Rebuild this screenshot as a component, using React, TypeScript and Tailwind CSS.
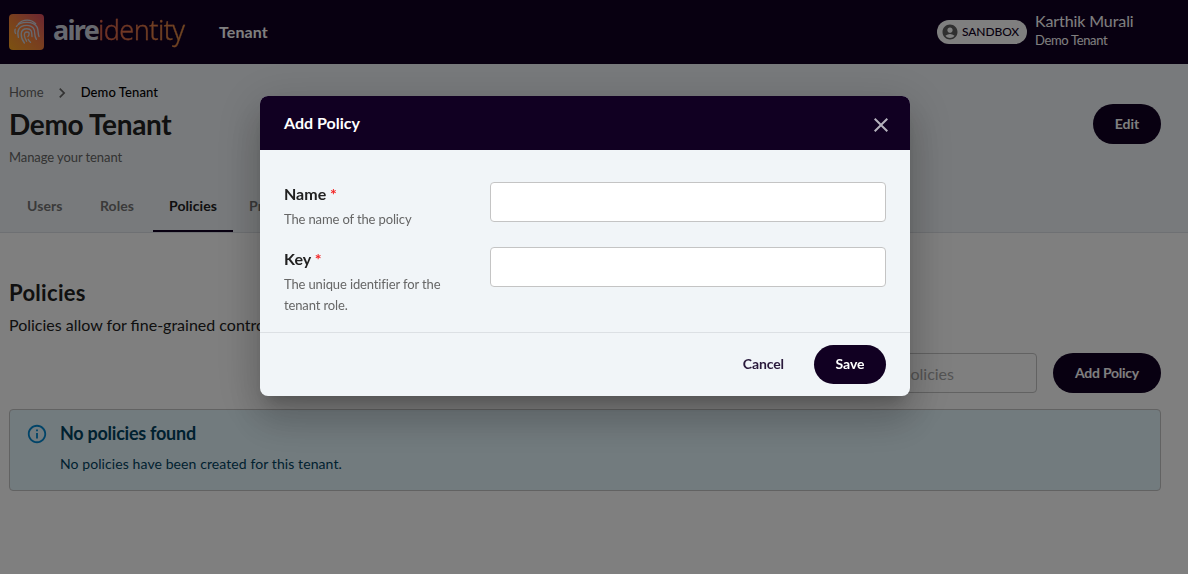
import { MdAccountCircle, MdChevronRight, MdClose, MdInfoOutline } from "react-icons/md";

const tabs = ["Users", "Roles", "Policies", "Pr"];

function FingerprintMark() {
  return (
    <svg viewBox="0 0 26 26" className="size-[26px]" fill="none" stroke="#cfd3df" strokeWidth="1.35" strokeLinecap="round">
      <path d="M4.400 4.800C9 -.1 17.200 -.1 21.600 4.800" />
      <path d="M1.200 10.200C.6 11.800 .8 13 1.600 14.500" />
      <path d="M2.400 7.400C6 2.200 20 1.500 23.200 8.400C24.600 11.500 23.800 15 25 17.500" />
      <path d="M4.400 18.300C3 13 3.800 6.400 12.800 6.400C19.600 6.400 20.900 11 20.800 15C20.800 17.500 21.800 19.300 22.400 20.300" />
      <path d="M10.400 24C6.500 19 5 9.700 12.900 9.700C18.600 9.700 17.600 14.500 18 17.500" />
      <path d="M12.600 22.200C10.200 18.500 9 13 12.900 13C16.200 13 15.200 16 13.900 17.600" />
      <path d="M14.200 20.300C15 21.800 15.600 22.600 16.500 23.300" />
    </svg>
  );
}

function Header() {
  return (
    <header className="flex h-16 items-center bg-[#110022] pl-[9px] text-white">
      <div className="flex h-[36px] w-[35px] shrink-0 items-center justify-center rounded-[4px] bg-linear-to-tr from-[#f9a51e] via-[#f27f3c] to-[#d8495f]">
        <FingerprintMark />
      </div>
      <div className="ml-[9px] flex w-[135px] pb-[4px] font-['Noto_Sans',sans-serif] text-[27px] leading-9 whitespace-nowrap">
        <span className="w-[45px] font-bold tracking-[-1.7px] text-[#cfd3df]">aire</span>
        <span className="bg-linear-to-r from-[#e2604c] to-[#e39142] bg-clip-text pr-1 font-light tracking-[-0.55px] text-transparent [-webkit-text-stroke:0.3px_#e0774880]">
          identity
        </span>
      </div>
      <span className="ml-[31px] text-base font-bold tracking-[0.1px]">Tenant</span>
      <div className="ml-auto flex h-6 w-[90px] items-center gap-1 rounded-full bg-white pl-[4px] text-[#110022]">
        <MdAccountCircle className="size-[18px] shrink-0 text-[#616161]" />
        <span className="-ml-px text-xs font-medium tracking-[-0.1px]">SANDBOX</span>
      </div>
      <div className="mr-[54px] ml-2 w-[99px] pb-1 whitespace-nowrap">
        <div className="text-base leading-5 tracking-[-0.1px]">Karthik Murali</div>
        <div className="text-[13px] leading-[18px] tracking-[-0.35px]">Demo Tenant</div>
      </div>
    </header>
  );
}

function PageHeading() {
  return (
    <section className="flex h-[169px] flex-col border-b border-[#dde1e6] bg-[#f1f5f8]">
      <div className="flex items-start justify-between pr-[27px] pl-[9px]">
        <div className="pt-[19px]">
          <nav className="flex h-5 items-center text-[13px] text-[#666]">
            <span>Home</span>
            <MdChevronRight className="mr-[9px] ml-2 size-5" />
            <span className="font-medium tracking-[0.1px] text-black">Demo Tenant</span>
          </nav>
          <h1 className="mt-[3px] text-[28px] leading-9 font-bold tracking-[-0.32px] text-[#212121]">Demo Tenant</h1>
          <p className="mt-[5px] text-[13px] leading-5 tracking-[-0.08px] text-[#666]">Manage your tenant</p>
        </div>
        <button className="mt-10 h-10 w-[68px] rounded-[20px] bg-[#110022] text-sm font-bold text-white">Edit</button>
      </div>
      <div className="mt-auto flex h-[52px] pl-[11px]">
        {tabs.map((tab) => (
          <div
            key={tab}
            className={
              tab === "Policies"
                ? "w-20 border-b-2 border-[#110022] px-4 pt-4 text-sm leading-5 font-bold tracking-[0.08px] text-[#212121]"
                : "px-4 pt-4 text-sm leading-5 font-bold tracking-[0.08px] text-[#757575] first:w-[73px] nth-2:w-[69px]"
            }
          >
            {tab}
          </div>
        ))}
      </div>
    </section>
  );
}

function Policies() {
  return (
    <main className="pr-[27px] pl-[9px]">
      <h2 className="pt-[45px] text-[22px] leading-[30px] font-bold tracking-[0.3px] text-[#212121]">Policies</h2>
      <p className="mt-[5px] text-base leading-6 text-[#212121]">Policies allow for fine-grained control</p>
      <div className="mt-4 flex justify-end gap-4">
        <div className="h-10 w-[240px] rounded-[4px] border border-[#c4c4c4] pt-[8px] text-right text-base leading-6 text-[#a8a8a8]">
          <span className="mr-[82px]">policies</span>
        </div>
        <button className="h-10 w-[108px] rounded-[20px] bg-[#110022] text-sm font-bold tracking-[-0.25px] text-white">
          Add Policy
        </button>
      </div>
      <div className="mt-4 flex h-[82px] rounded-[4px] border border-[#c4c4c4] bg-[#e5f6fd] pl-4 text-[#014361]">
        <MdInfoOutline className="mt-[13px] size-[22px] text-[#0288d1]" />
        <div className="ml-3">
          <h3 className="mt-[10px] text-lg leading-[26px] font-bold tracking-[-0.25px]">No policies found</h3>
          <p className="mt-[8px] text-sm leading-5 tracking-[0.09px]">No policies have been created for this tenant.</p>
        </div>
      </div>
    </main>
  );
}

function Field({ label, hint }: { label: string; hint: string }) {
  return (
    <div className="flex">
      <div className="w-[206px] pr-8">
        <label className="block text-base leading-6 font-bold text-[#212121]">
          {label} <span className="text-[#f42525]">*</span>
        </label>
        <p className="mt-[3px] text-[13px] leading-[21px] tracking-[-0.13px] text-[#666]">{hint}</p>
      </div>
      <input aria-label={label} className="h-10 w-[396px] rounded-[4px] border border-[#c4c4c4] bg-white px-3" />
    </div>
  );
}

function AddPolicyDialog() {
  return (
    <div className="fixed inset-0 flex items-start justify-center bg-black/50 pt-24 pr-[18px]">
      <div
        role="dialog"
        className="flex h-[300px] w-[650px] flex-col overflow-hidden rounded-lg bg-[#f1f5f8] shadow-[0px_11px_15px_-7px_rgba(0,0,0,0.2),0px_24px_38px_3px_rgba(0,0,0,0.14),0px_9px_46px_8px_rgba(0,0,0,0.12)]"
      >
        <div className="flex h-[54px] items-center justify-between bg-[#110022] pr-[17px] pl-6 text-white">
          <h2 className="text-base font-bold">Add Policy</h2>
          <MdClose className="mt-[3px] size-6 text-[#b5b2bd]" />
        </div>
        <div className="flex flex-col gap-[17px] px-6 pt-8">
          <Field label="Name" hint="The name of the policy" />
          <Field label="Key" hint="The unique identifier for the tenant role." />
        </div>
        <div className="mt-auto flex h-16 justify-end border-t border-[#dce0e4] pt-3 pr-6">
          <button className="h-[39px] px-[30px] pb-[2px] text-sm font-bold tracking-[-0.1px] text-[#2a1a3c]">Cancel</button>
          <button className="h-[39px] w-[72px] rounded-[20px] bg-[#110022] pb-[2px] text-sm font-bold tracking-[-0.1px] text-white">
            Save
          </button>
        </div>
      </div>
    </div>
  );
}

export default function App() {
  return (
    <div className="h-screen overflow-hidden bg-white font-['Lato',sans-serif]">
      <Header />
      <PageHeading />
      <Policies />
      <AddPolicyDialog />
    </div>
  );
}
